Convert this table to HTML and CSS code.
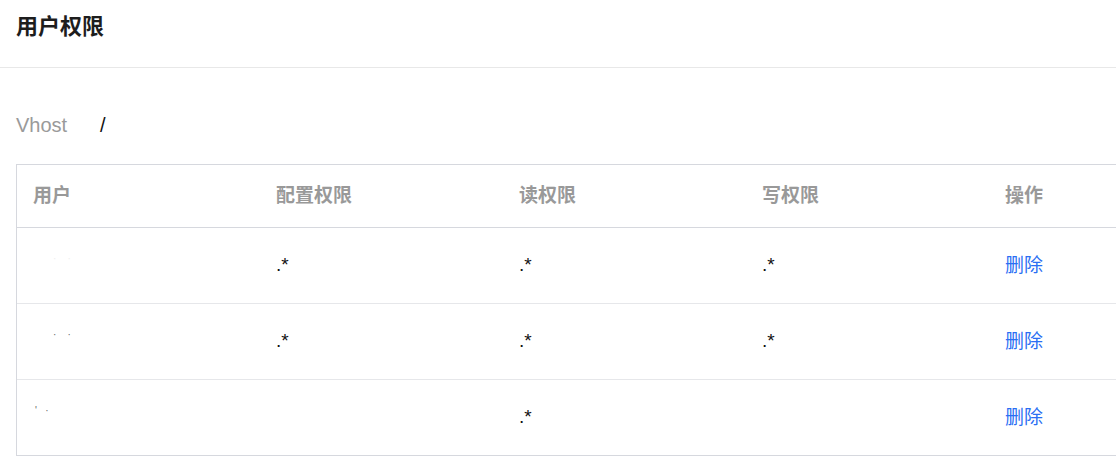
FILE: index.html
```html
<!DOCTYPE html>
<html lang="zh-CN">
<head>
<meta charset="utf-8">
<title>用户权限</title>
<link rel="stylesheet" href="styles.css">
</head>
<body>
<header class="page-header">
  <h1 class="page-title">用户权限</h1>
</header>
<main class="content">
  <div class="field">
    <span class="field-label">Vhost</span>
    <span class="field-value">/</span>
  </div>
  <div class="table-wrap">
    <div class="table">
      <div class="row head">
        <div class="cell">用户</div>
        <div class="cell">配置权限</div>
        <div class="cell">读权限</div>
        <div class="cell">写权限</div>
        <div class="cell">操作</div>
      </div>
      <div class="row">
        <div class="cell"><span class="masked faint">·&nbsp;&nbsp;&nbsp;&nbsp;·</span></div>
        <div class="cell"><span class="pattern">.*</span></div>
        <div class="cell"><span class="pattern">.*</span></div>
        <div class="cell"><span class="pattern">.*</span></div>
        <div class="cell"><a class="action" href="#">删除</a></div>
      </div>
      <div class="row">
        <div class="cell"><span class="masked">·&nbsp;&nbsp;&nbsp;&nbsp;·</span></div>
        <div class="cell"><span class="pattern">.*</span></div>
        <div class="cell"><span class="pattern">.*</span></div>
        <div class="cell"><span class="pattern">.*</span></div>
        <div class="cell"><a class="action" href="#">删除</a></div>
      </div>
      <div class="row last">
        <div class="cell"><span class="masked m3">'&nbsp;&nbsp;&nbsp;·</span></div>
        <div class="cell"></div>
        <div class="cell"><span class="pattern">.*</span></div>
        <div class="cell"></div>
        <div class="cell"><a class="action" href="#">删除</a></div>
      </div>
    </div>
  </div>
</main>
</body>
</html>
```
FILE: styles.css
```css
html, body {
  margin: 0;
  padding: 0;
  overflow: hidden;
  background: #fff;
}
body {
  font-family: "Liberation Sans", "Noto Sans CJK SC", sans-serif;
  color: #1f1f1f;
}
.page-header {
  padding: 11px 16px 24px;
  border-bottom: 1px solid #e8e8e8;
}
.page-title {
  margin: 0;
  font-size: 22px;
  line-height: 32px;
  font-weight: 700;
  color: #1d1d1d;
}
.content {
  padding: 43px 0 0 16px;
}
.field {
  display: flex;
  align-items: center;
  height: 28px;
  font-size: 20px;
  line-height: 28px;
}
.field-label {
  width: 84px;
  color: #9a9a9a;
}
.field-value {
  color: #111;
}
.table-wrap {
  margin-top: 25px;
  overflow: hidden;
}
.table {
  width: 1215px;
  border: 1px solid #d6d8de;
}
.row {
  display: grid;
  grid-template-columns: repeat(5, 243px);
  height: 75px;
  border-bottom: 1px solid #e6e7ea;
  align-items: center;
  font-size: 19px;
}
.row.head {
  height: 62px;
  border-bottom-color: #d6d8de;
  color: #999;
  font-weight: 600;
  font-size: 19px;
}
.row.last {
  border-bottom: none;
}
.cell {
  padding-left: 16px;
  line-height: 28px;
}
.pattern {
  color: #111;
  font-size: 19px;
  position: relative;
  top: -1px;
}
.action {
  color: #2a6ef3;
  text-decoration: none;
}
.masked {
  font-size: 10px;
  color: #666;
  padding-left: 20px;
  position: relative;
  top: -8px;
}
.masked.faint {
  color: #eee;
}
.masked.m3 {
  padding-left: 2px;
}
```
